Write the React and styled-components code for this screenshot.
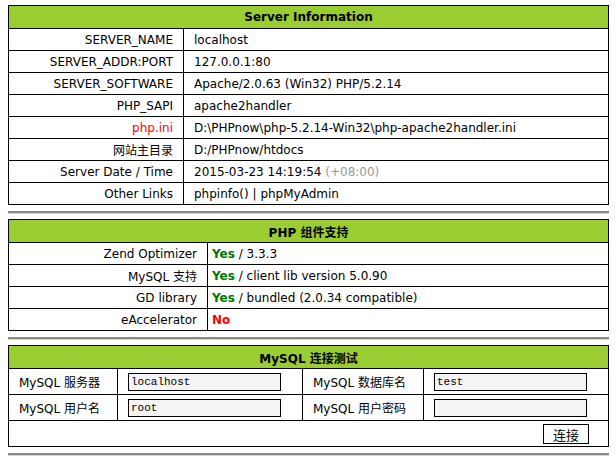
import React from 'react';
import styled, { createGlobalStyle } from 'styled-components';

const GlobalStyle = createGlobalStyle`
  body {
    margin: 0;
    padding: 5px 8px;
    background: #fff;
    color: #000;
    font-family: "DejaVu Sans", Verdana, "Noto Sans CJK SC", sans-serif;
    font-size: 12px;
  }
`;

const Page = styled.div`
  width: 601px;
`;

const Table = styled.table`
  width: 100%;
  border-collapse: collapse;
  table-layout: fixed;
`;

const Head = styled.th`
  height: 22px;
  padding: 0;
  border: 1px solid #000;
  background: #9acd32;
  font-weight: bold;
  font-size: 12px;
  text-align: center;
`;

const Label = styled.td`
  height: ${(p) => p.$h || 21}px;
  padding: 0 10px;
  border: 1px solid #000;
  text-align: ${(p) => (p.$left ? 'left' : 'right')};
  color: ${(p) => (p.$red ? '#ff0000' : '#000')};
  white-space: nowrap;
`;

const Value = styled.td`
  height: ${(p) => p.$h || 21}px;
  padding: 0 ${(p) => p.$pad ?? 10}px;
  border: 1px solid #000;
  white-space: nowrap;
  text-align: ${(p) => p.$align || 'left'};
`;

const Muted = styled.span`
  color: #999;
`;

const Yes = styled.b`
  color: #007700;
`;

const No = styled.b`
  color: #ff0000;
`;

const Divider = styled.hr`
  margin: 6px 0 5px;
  height: 0;
  border: 0;
  border-top: 2px solid #888;
  border-bottom: 1px solid #d4d4d4;
`;

const Field = styled.input`
  box-sizing: border-box;
  width: 153px;
  height: 18px;
  margin: 0;
  padding: 0 2px;
  border: 1px solid #000;
  background: #f4f4f4;
  font-family: "Liberation Mono", "Courier New", monospace;
  font-size: 11px;
  color: #000;
  vertical-align: middle;
`;

const Button = styled.button`
  box-sizing: border-box;
  width: 46px;
  height: 20px;
  padding: 0;
  border: 1px solid #000;
  background: #fff;
  font-family: "DejaVu Sans", "Noto Sans CJK SC", sans-serif;
  font-size: 13px;
  color: #000;
  vertical-align: middle;
`;

const serverRows = [
  ['SERVER_NAME', 'localhost'],
  ['SERVER_ADDR:PORT', '127.0.0.1:80'],
  ['SERVER_SOFTWARE', 'Apache/2.0.63 (Win32) PHP/5.2.14'],
  ['PHP_SAPI', 'apache2handler'],
  ['php.ini', 'D:\\PHPnow\\php-5.2.14-Win32\\php-apache2handler.ini', true],
  ['网站主目录', 'D:/PHPnow/htdocs'],
  ['Server Date / Time', <>2015-03-23 14:19:54 <Muted>(+08:00)</Muted></>],
  ['Other Links', 'phpinfo() | phpMyAdmin'],
];

const phpRows = [
  ['Zend Optimizer', <><Yes>Yes</Yes> / 3.3.3</>],
  ['MySQL 支持', <><Yes>Yes</Yes> / client lib version 5.0.90</>],
  ['GD library', <><Yes>Yes</Yes> / bundled (2.0.34 compatible)</>],
  ['eAccelerator', <No>No</No>],
];

export default function App() {
  return (
    <Page>
      <GlobalStyle />
      <Table>
        <colgroup>
          <col style={{ width: 175 }} />
          <col />
        </colgroup>
        <thead>
          <tr><Head colSpan={2}>Server Information</Head></tr>
        </thead>
        <tbody>
          {serverRows.map(([k, v, red]) => (
            <tr key={k}>
              <Label $red={red}>{k}</Label>
              <Value>{v}</Value>
            </tr>
          ))}
        </tbody>
      </Table>
      <Divider />
      <Table>
        <colgroup>
          <col style={{ width: 199 }} />
          <col />
        </colgroup>
        <thead>
          <tr><Head colSpan={2}>PHP 组件支持</Head></tr>
        </thead>
        <tbody>
          {phpRows.map(([k, v]) => (
            <tr key={k}>
              <Label>{k}</Label>
              <Value $pad={4}>{v}</Value>
            </tr>
          ))}
        </tbody>
      </Table>
      <Divider />
      <Table>
        <colgroup>
          <col style={{ width: 109 }} />
          <col style={{ width: 185 }} />
          <col style={{ width: 121 }} />
          <col />
        </colgroup>
        <thead>
          <tr><Head colSpan={4}>MySQL 连接测试</Head></tr>
        </thead>
        <tbody>
          <tr>
            <Label $left $h={25}>MySQL 服务器</Label>
            <Value $h={25}><Field defaultValue="localhost" /></Value>
            <Label $left $h={25}>MySQL 数据库名</Label>
            <Value $h={25}><Field defaultValue="test" /></Value>
          </tr>
          <tr>
            <Label $left $h={25}>MySQL 用户名</Label>
            <Value $h={25}><Field defaultValue="root" /></Value>
            <Label $left $h={25}>MySQL 用户密码</Label>
            <Value $h={25}><Field type="password" /></Value>
          </tr>
          <tr>
            <Value colSpan={4} $h={25} $align="right" $pad={19}>
              <Button>连接</Button>
            </Value>
          </tr>
        </tbody>
      </Table>
      <Divider />
    </Page>
  );
}
